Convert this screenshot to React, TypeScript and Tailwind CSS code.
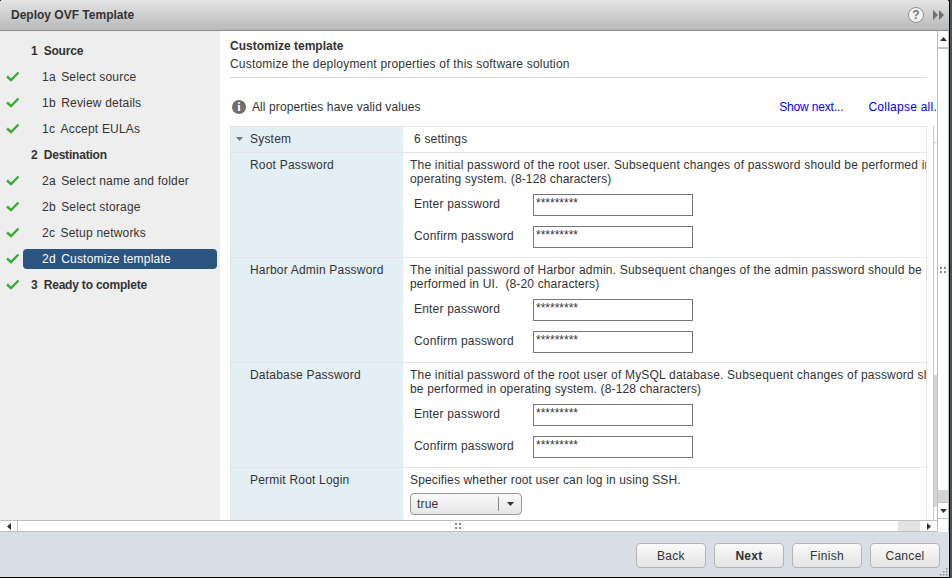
const FONT = "font-['Liberation_Sans',Arial,sans-serif]";

type Step = { num: string; label: string; done?: boolean; top?: boolean; active?: boolean };

const steps: Step[] = [
  { num: "1", label: "Source", top: true },
  { num: "1a", label: "Select source", done: true },
  { num: "1b", label: "Review details", done: true },
  { num: "1c", label: "Accept EULAs", done: true },
  { num: "2", label: "Destination", top: true },
  { num: "2a", label: "Select name and folder", done: true },
  { num: "2b", label: "Select storage", done: true },
  { num: "2c", label: "Setup networks", done: true },
  { num: "2d", label: "Customize template", done: true, active: true },
  { num: "3", label: "Ready to complete", done: true, top: true },
];

const passwords = [
  {
    name: "Root Password",
    lines: [
      "The initial password of the root user. Subsequent changes of password should be performed in",
      "operating system. (8-128 characters)",
    ],
  },
  {
    name: "Harbor Admin Password",
    lines: [
      "The initial password of Harbor admin. Subsequent changes of the admin password should be",
      "performed in UI.  (8-20 characters)",
    ],
  },
  {
    name: "Database Password",
    lines: [
      "The initial password of the root user of MySQL database. Subsequent changes of password should",
      "be performed in operating system. (8-128 characters)",
    ],
  },
];

function Check() {
  return (
    <svg width="14" height="11" viewBox="0 0 14 11" className="block shrink-0">
      <path d="M1 5.5 L5 9 L12.5 1.5" fill="none" stroke="#3cab38" strokeWidth="2.4" />
    </svg>
  );
}

function Arrow({ dir, color = "#333" }: { dir: "up" | "down" | "left" | "right"; color?: string }) {
  const points = {
    up: "0,4 3.5,0 7,4",
    down: "0,0 7,0 3.5,4",
    left: "4,0 4,7 0,3.5",
    right: "0,0 0,7 4,3.5",
  }[dir];
  const vertical = dir === "up" || dir === "down";
  return (
    <svg width={vertical ? 7 : 4} height={vertical ? 4 : 7}>
      <polygon points={points} fill={color} />
    </svg>
  );
}

function StepRow({ step }: { step: Step }) {
  return (
    <div className="flex h-[26px] items-center pl-[6px] pr-[3px]">
      <div className="w-[17px] shrink-0 pb-[2px]">{step.done && <Check />}</div>
      <div
        className={`flex h-[20px] flex-1 items-center rounded-[4px] ${
          step.active ? "bg-[#2b5480] text-white" : "text-[#333]"
        } ${step.top ? "pl-[8px] font-bold" : "pl-[19px]"}`}
      >
        <span className={step.top ? "mr-[6px]" : "mr-[5px] tracking-[0.4px]"}>{step.num}</span>
        <span className={step.top ? "tracking-[-0.2px]" : "tracking-[0.2px]"}>{step.label}</span>
      </div>
    </div>
  );
}

function PasswordField({ label }: { label: string }) {
  return (
    <div className="flex h-[22px] pl-[4px]">
      <span className="w-[119px] shrink-0 pt-[3px] leading-[14px] tracking-[0.2px]">{label}</span>
      <div className="h-[22px] w-[160px] border border-[#767676] bg-white pl-[2px] pt-[1px] text-[12px] leading-[14px] text-[#333]">
        *********
      </div>
    </div>
  );
}

function PasswordRow({ name, lines }: { name: string; lines: string[] }) {
  return (
    <div className="flex h-[105px] border-b border-[#e4e4e4]">
      <div className="w-[172px] shrink-0 bg-[#e3eef5] pl-[19px] pt-[5px] leading-[14px] tracking-[0.2px]">{name}</div>
      <div className="min-w-0 flex-1 overflow-hidden whitespace-pre pl-[7px] pt-[5px] leading-[14px]">
        <div className="tracking-[0.2px]">{lines[0]}</div>
        <div className="tracking-[0.15px]">{lines[1]}</div>
        <div className="mt-[8px] flex flex-col gap-[10px]">
          <PasswordField label="Enter password" />
          <PasswordField label="Confirm password" />
        </div>
      </div>
    </div>
  );
}

function FooterButton({ label, bold }: { label: string; bold?: boolean }) {
  return (
    <button
      className={`h-[25px] w-[70px] rounded-[4px] border border-[#b4b4b4] bg-gradient-to-b from-[#fafafa] to-[#e4e4e4] text-[12px] tracking-[0.3px] text-[#333] ${
        bold ? "font-bold" : ""
      }`}
    >
      {label}
    </button>
  );
}

function GripDots() {
  return (
    <div className="grid grid-cols-2 gap-[2px]">
      <span className="h-[2px] w-[2px] bg-[#888]" />
      <span className="h-[2px] w-[2px] bg-[#888]" />
      <span className="h-[2px] w-[2px] bg-[#888]" />
      <span className="h-[2px] w-[2px] bg-[#888]" />
    </div>
  );
}

export default function App() {
  return (
    <div className={`${FONT} flex h-[578px] w-[952px] overflow-hidden bg-black text-[12px] text-[#333]`}>
      <div className="flex h-[577px] w-[949px] shrink-0 flex-col overflow-hidden rounded-t-[3px] bg-white">
        <header className="flex h-[31px] shrink-0 items-center justify-between border-b border-[#8c8c8c] bg-gradient-to-b from-[#e4e4e4] to-[#b8b9ba] pl-[11px] pr-[5px]">
          <span className="font-bold text-[#333]">Deploy OVF Template</span>
          <div className="flex items-center gap-[9px]">
            <div className="flex h-[16px] w-[16px] items-center justify-center rounded-full border border-[#8f8f8f] bg-[#f2f2f2] text-[12px] font-bold leading-none text-[#777]">
              ?
            </div>
            <svg width="11" height="10" viewBox="0 0 11 10">
              <polygon points="0,0 5,5 0,10" fill="#6f6f6f" />
              <polygon points="6,0 11,5 6,10" fill="#6f6f6f" />
            </svg>
          </div>
        </header>

        <div className="flex min-h-0 flex-1">
          <div className="flex min-w-0 flex-1 flex-col">
            <div className="flex min-h-0 flex-1">
              <aside className="w-[220px] shrink-0 bg-[#eeeeee] pt-[7px]">
                {steps.map((step) => (
                  <StepRow key={step.num} step={step} />
                ))}
              </aside>

              <main className="flex min-w-0 flex-1 flex-col overflow-hidden bg-white">
                <div className="mx-[10px] h-[47px] shrink-0 border-b border-[#d8d8d8] pt-[7px] leading-[17px]">
                  <div className="font-bold">Customize template</div>
                  <div className="mt-[1px] tracking-[0.2px]">Customize the deployment properties of this software solution</div>
                </div>

                <div className="flex h-[48px] shrink-0 items-center justify-between pb-[2px] pl-[12px] pr-0 pt-[11px]">
                  <div className="flex items-center gap-[6px] tracking-[0.1px]">
                    <div className="flex h-[14px] w-[14px] items-center justify-center rounded-full bg-[#6e6e6e] font-['Liberation_Serif',serif] text-[12px] font-bold leading-none text-white">
                      i
                    </div>
                    All properties have valid values
                  </div>
                  <div className="flex gap-[25px] text-[#0000ff]">
                    <span className="tracking-[-0.15px]">Show next...</span>
                    <span className="tracking-[0.25px]">Collapse all.</span>
                  </div>
                </div>

                <div className="flex min-h-0 flex-1">
                  <div className="ml-[10px] w-[697px] shrink-0 overflow-hidden border-x border-t border-[#e4e4e4]">
                    <div className="flex h-[26px] border-b border-[#e4e4e4]">
                      <div className="flex w-[172px] shrink-0 items-center gap-[7px] bg-[#e3eef5] pb-[2px] pl-[5px] tracking-[0.2px]">
                        <Arrow dir="down" color="#777" />
                        <span>System</span>
                      </div>
                      <div className="flex flex-1 items-center pb-[2px] pl-[11px] tracking-[0.2px]">6 settings</div>
                    </div>
                    {passwords.map((row) => (
                      <PasswordRow key={row.name} name={row.name} lines={row.lines} />
                    ))}
                    <div className="flex h-[60px]">
                      <div className="w-[172px] shrink-0 bg-[#e3eef5] pl-[19px] pt-[5px] leading-[14px] tracking-[0.2px]">
                        Permit Root Login
                      </div>
                      <div className="flex-1 pl-[7px] pt-[5px] leading-[14px] tracking-[0.15px]">
                        <div>Specifies whether root user can log in using SSH.</div>
                        <div className="mt-[6px] flex h-[22px] w-[112px] items-center rounded-[4px] border border-[#999] bg-gradient-to-b from-[#fafafa] to-[#e6e6e6]">
                          <span className="flex-1 pl-[6px]">true</span>
                          <span className="flex h-[14px] w-[23px] items-center justify-center border-l border-[#888]">
                            <Arrow dir="down" />
                          </span>
                        </div>
                      </div>
                    </div>
                  </div>
                  <div className="ml-auto flex w-[4px] shrink-0 flex-col border-l border-[#c8c8c8]">
                    <div className="h-[17px] shrink-0 border-b border-[#c8c8c8] bg-white" />
                    <div className="h-[232px] shrink-0 bg-white" />
                    <div className="flex-1 bg-[#d4d4d4]" />
                    <div className="h-[13px] shrink-0 bg-white" />
                  </div>
                </div>
              </main>
            </div>

            <div className="flex h-[12px] shrink-0 items-center border-y border-[#c0c0c0] bg-white">
              <div className="flex h-full w-[18px] items-center justify-center border-r border-[#c0c0c0]">
                <Arrow dir="left" />
              </div>
              <div className="flex flex-1 justify-center">
                <GripDots />
              </div>
              <div className="h-full w-[22px] bg-[#e2e2e2]" />
              <div className="flex h-full w-[17px] items-center justify-center">
                <Arrow dir="right" />
              </div>
            </div>
          </div>

          <div className="flex w-[12px] shrink-0 flex-col border-x border-[#c0c0c0] bg-white">
            <div className="flex h-[18px] shrink-0 items-center justify-center border-b-2 border-[#c0c0c0]">
              <Arrow dir="up" />
            </div>
            <div className="flex h-[441px] shrink-0 items-center justify-center bg-white">
              <GripDots />
            </div>
            <div className="h-[12px] shrink-0 bg-[#d4d4d4]" />
            <div className="flex h-[17px] shrink-0 items-center justify-center border-y border-[#c0c0c0]">
              <Arrow dir="down" />
            </div>
          </div>
        </div>

        <footer className="relative flex h-[45px] shrink-0 items-start justify-end gap-[8px] bg-[#d8dde6] pr-[9px] pt-[11px]">
          <FooterButton label="Back" />
          <FooterButton label="Next" bold />
          <FooterButton label="Finish" />
          <FooterButton label="Cancel" />
          <svg width="9" height="9" className="absolute bottom-[1px] right-[1px]">
            {[[7, 1], [4, 4], [7, 4], [1, 7], [4, 7], [7, 7]].map(([x, y]) => (
              <rect key={`${x}-${y}`} x={x} y={y} width="1.5" height="1.5" fill="#8a8f96" />
            ))}
          </svg>
        </footer>
      </div>
      <div className="ml-[1px] h-full flex-1 bg-[#4b5258]" />
    </div>
  );
}
